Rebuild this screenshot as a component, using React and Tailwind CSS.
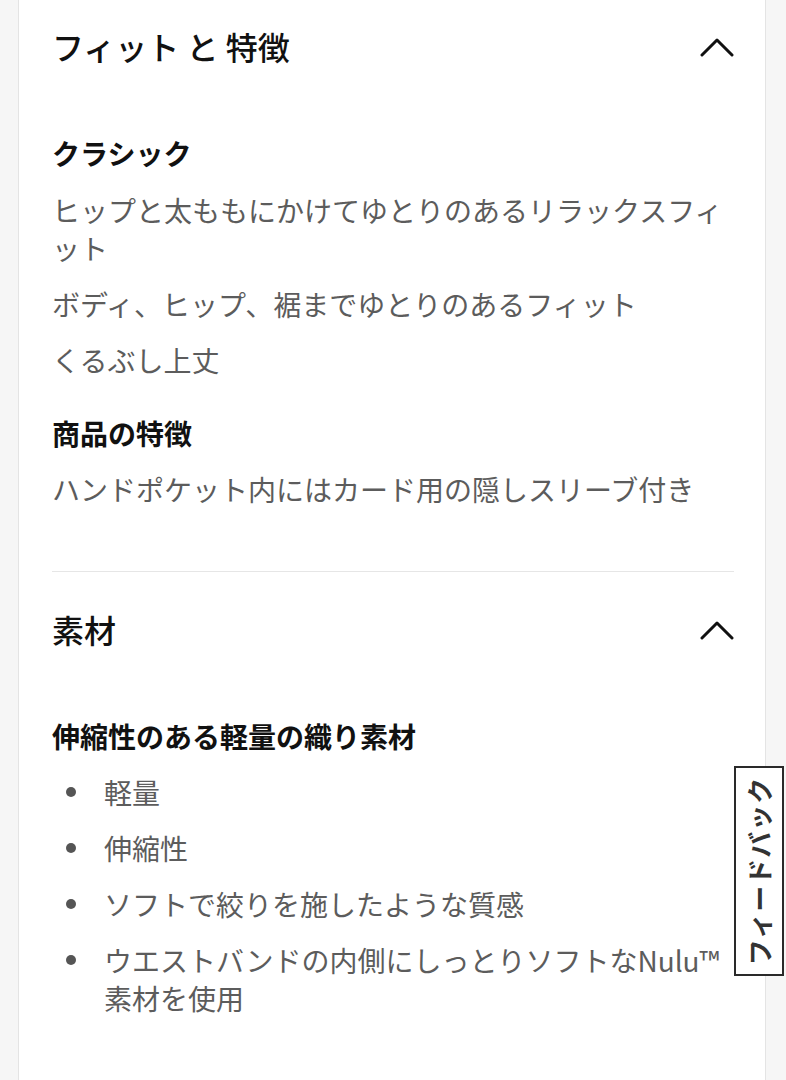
import React from "react";

const font = { fontFamily: '"Noto Sans CJK JP", "Noto Sans", sans-serif' };

function Chevron() {
  return (
    <svg width="34" height="20" viewBox="0 0 34 20" fill="none" className="shrink-0">
      <path d="M2 18 L17 3 L32 18" stroke="#111" strokeWidth="3" strokeLinecap="round" strokeLinejoin="round" />
    </svg>
  );
}

function Header({ title }) {
  return (
    <div className="flex h-[118px] items-center justify-between">
      <h2 className="-mt-[4px] text-[32px] leading-[40px] font-medium text-[#111]">{title}</h2>
      <div className="-mt-[2px]">
        <Chevron />
      </div>
    </div>
  );
}

export default function App() {
  return (
    <div className="relative flex min-h-[1080px] w-[786px] overflow-hidden bg-white" style={font}>
      <div className="w-[19px] shrink-0 border-r border-[#e4e4e4] bg-[#f6f6f6]" />
      <main className="flex-1 bg-white pl-[33px] pr-[31px]">
        <section className="-mt-[11px]">
          <Header title="フィット と 特徴" />
          <div className="pt-[27px] pb-[63px]">
            <h3 className="text-[28px] leading-[38px] font-bold text-[#111]">クラシック</h3>
            <div className="mt-[19px] flex flex-col gap-[18px] text-[28px] leading-[38px] text-[#5c5c5c]">
              <p>ヒップと太ももにかけてゆとりのあるリラックスフィ<br />ット</p>
              <p>ボディ、ヒップ、裾までゆとりのあるフィット</p>
              <p>くるぶし上丈</p>
            </div>
            <h3 className="mt-[35px] text-[28px] leading-[38px] font-bold text-[#111]">商品の特徴</h3>
            <div className="mt-[18px] text-[28px] leading-[38px] text-[#5c5c5c]">
              <p>ハンドポケット内にはカード用の隠しスリーブ付き</p>
            </div>
          </div>
        </section>
        <div className="h-px bg-[#e6e6e6]" />
        <section>
          <Header title="素材" />
          <div className="pt-[27px]">
            <h3 className="text-[28px] leading-[38px] font-bold text-[#111]">伸縮性のある軽量の織り素材</h3>
            <ul className="mt-[18px] flex flex-col gap-[18px] text-[28px] leading-[38px] text-[#5c5c5c]">
              {["軽量", "伸縮性", "ソフトで絞りを施したような質感"].map((t) => (
                <li key={t} className="flex items-start">
                  <span className="mt-[14px] ml-[14px] mr-[28px] h-[10px] w-[10px] shrink-0 rounded-full bg-[#555]" />
                  <span>{t}</span>
                </li>
              ))}
              <li className="flex items-start">
                <span className="mt-[14px] ml-[14px] mr-[28px] h-[10px] w-[10px] shrink-0 rounded-full bg-[#555]" />
                <span>ウエストバンドの内側にしっとりソフトなNulu™<br />素材を使用</span>
              </li>
            </ul>
          </div>
        </section>
      </main>
      <div className="w-[21px] shrink-0 border-l border-[#e4e4e4] bg-[#f6f6f6]" />
      <div className="absolute left-[734px] top-[766px] flex h-[210px] w-[50px] items-center justify-center border-2 border-[#2a2a2a] bg-white">
        <span className="-rotate-90 whitespace-nowrap text-[26px] leading-none font-bold tracking-[1px] text-[#333]">フィードバック</span>
      </div>
    </div>
  );
}
